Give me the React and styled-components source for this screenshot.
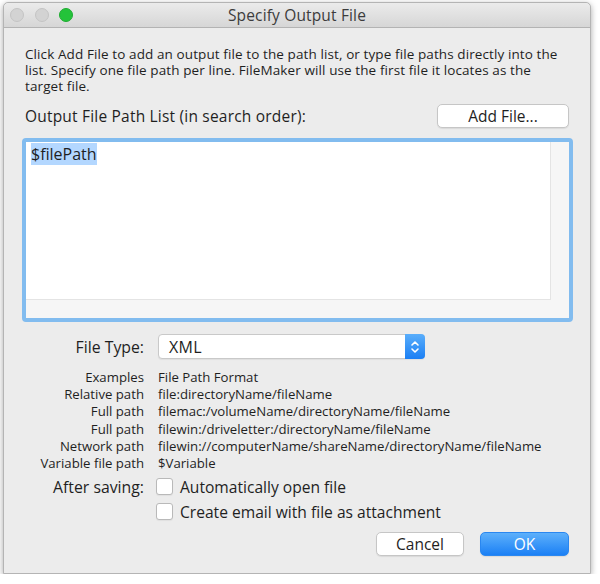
import styled, { createGlobalStyle } from 'styled-components';

const GlobalStyle = createGlobalStyle`
  body {
    margin: 0;
    background: #ffffff;
    font-family: 'Open Sans', 'Liberation Sans', sans-serif;
    color: #1f1f1f;
  }
`;

const Window = styled.div`
  box-sizing: border-box;
  width: 588px;
  height: 572px;
  margin: 2px 0 0 3px;
  background: #ececec;
  border: 1px solid #b4b4b4;
  border-radius: 5px 5px 0 0;
  box-shadow: 0 2px 6px rgba(0, 0, 0, 0.35);
  display: flex;
  flex-direction: column;
`;

const TitleBar = styled.div`
  height: 24px;
  flex: none;
  display: grid;
  grid-template-columns: 1fr auto 1fr;
  align-items: center;
  padding: 0 6px;
  background: linear-gradient(#ebebeb, #d6d6d6);
  border-bottom: 1px solid #b3b3b3;
  border-radius: 5px 5px 0 0;
`;

const Lights = styled.div`
  display: flex;
  gap: 10.5px;
`;

const Light = styled.span`
  width: 14px;
  height: 14px;
  border-radius: 50%;
  box-sizing: border-box;
  background: ${p => (p.$on ? '#24c33a' : '#d3d3d3')};
  border: 1px solid ${p => (p.$on ? '#1eac31' : '#c4c4c4')};
`;

const Title = styled.div`
  font-size: 15.5px;
  letter-spacing: 0.15px;
  color: #3c3c3c;
`;

const Body = styled.div`
  flex: 1;
  padding: 18px 21px 0 21px;
  display: flex;
  flex-direction: column;
`;

const Intro = styled.p`
  margin: 0;
  font-size: 13.5px;
  letter-spacing: 0.1px;
  line-height: 16px;
`;

const ListHeader = styled.div`
  margin-top: 10px;
  display: flex;
  justify-content: space-between;
  align-items: center;
`;

const ListLabel = styled.div`
  font-size: 15.5px;
  letter-spacing: 0.2px;
`;

const Button = styled.button`
  box-sizing: border-box;
  height: 24px;
  width: ${p => p.$w}px;
  border-radius: 5px;
  font-family: inherit;
  font-size: 15.5px;
  padding: 0;
  border: 1px solid ${p => (p.$primary ? '#2a87f0' : '#c6c6c6')};
  color: ${p => (p.$primary ? '#ffffff' : '#1f1f1f')};
  background: ${p => (p.$primary ? 'linear-gradient(#5db0fb, #1b80f5)' : '#ffffff')};
  box-shadow: 0 1px 1px rgba(0, 0, 0, 0.08);
`;

const PathField = styled.div`
  margin: 10px -4px 0 -3px;
  height: 184px;
  box-sizing: border-box;
  border: 4px solid #82bcef;
  border-radius: 4px;
  display: grid;
  grid-template-columns: 1fr 18px;
  grid-template-rows: 1fr 18px;
  background: #f6f6f6;
`;

const PathText = styled.div`
  background: #ffffff;
  border-right: 1px solid #e4e4e4;
  border-bottom: 1px solid #e4e4e4;
  padding: 4px 5px;
  font-size: 16px;
  line-height: 16px;
`;

const Selected = styled.span`
  background: #b3d7ff;
`;

const FormGrid = styled.div`
  display: grid;
  grid-template-columns: 119px 1fr;
  column-gap: 14px;
  align-items: center;
  margin-top: ${p => p.$top}px;
`;

const FieldLabel = styled.div`
  text-align: right;
  font-size: 15.8px;
`;

const Select = styled.div`
  box-sizing: border-box;
  width: 267px;
  height: 25px;
  display: flex;
  align-items: stretch;
  background: #ffffff;
  border: 1px solid #c9c9c9;
  border-radius: 4px;
  box-shadow: 0 1px 1px rgba(0, 0, 0, 0.06);
`;

const SelectValue = styled.div`
  flex: 1;
  display: flex;
  align-items: center;
  padding-left: 10px;
  font-size: 16px;
  letter-spacing: 0.3px;
`;

const Stepper = styled.div`
  width: 20px;
  margin: -1px -1px -1px 0;
  border-radius: 0 4px 4px 0;
  background: linear-gradient(#5aaefb, #1b7ff4);
  display: flex;
  align-items: center;
  justify-content: center;
`;

const ExampleTable = styled.div`
  margin-top: 10px;
  display: grid;
  grid-template-columns: 119px 1fr;
  column-gap: 14px;
  font-size: 13.2px;
  line-height: 17.2px;
`;

const ExampleKey = styled.div`
  text-align: right;
`;

const CheckGrid = styled.div`
  margin-top: 2px;
  display: grid;
  grid-template-columns: 119px 1fr;
  column-gap: 12px;
  grid-auto-rows: 25px;
  align-items: center;
`;

const Check = styled.label`
  display: flex;
  align-items: center;
  gap: 7px;
  font-size: 15.6px;
  grid-column: 2;
`;

const Box = styled.span`
  box-sizing: border-box;
  width: 17px;
  height: 17px;
  background: #ffffff;
  border: 1px solid #b9b9b9;
  border-radius: 3px;
  box-shadow: 0 1px 1px rgba(0, 0, 0, 0.05);
`;

const Footer = styled.div`
  margin-top: 8px;
  display: flex;
  justify-content: flex-end;
  gap: 16px;
`;

const examples = [
  ['Examples', 'File Path Format'],
  ['Relative path', 'file:directoryName/fileName'],
  ['Full path', 'filemac:/volumeName/directoryName/fileName'],
  ['Full path', 'filewin:/driveletter:/directoryName/fileName'],
  ['Network path', 'filewin://computerName/shareName/directoryName/fileName'],
  ['Variable file path', '$Variable'],
];

export default function App() {
  return (
    <>
      <GlobalStyle />
      <Window>
        <TitleBar>
          <Lights>
            <Light />
            <Light />
            <Light $on />
          </Lights>
          <Title>Specify Output File</Title>
          <span />
        </TitleBar>
        <Body>
          <Intro>
            Click Add File to add an output file to the path list, or type file paths directly into the
            list. Specify one file path per line. FileMaker will use the first file it locates as the
            target file.
          </Intro>
          <ListHeader>
            <ListLabel>Output File Path List (in search order):</ListLabel>
            <Button $w={132}>Add File...</Button>
          </ListHeader>
          <PathField>
            <PathText>
              <Selected>$filePath</Selected>
            </PathText>
            <div />
            <div />
            <div />
          </PathField>
          <FormGrid $top={12}>
            <FieldLabel>File Type:</FieldLabel>
            <Select>
              <SelectValue>XML</SelectValue>
              <Stepper>
                <svg width="10" height="14" viewBox="0 0 10 14" fill="none" stroke="#fff" strokeWidth="1.6" strokeLinecap="round" strokeLinejoin="round">
                  <path d="M2 5 L5 2 L8 5" />
                  <path d="M2 9 L5 12 L8 9" />
                </svg>
              </Stepper>
            </Select>
          </FormGrid>
          <ExampleTable>
            {examples.map(([k, v], i) => (
              <>
                <ExampleKey key={'k' + i}>{k}</ExampleKey>
                <div key={'v' + i}>{v}</div>
              </>
            ))}
          </ExampleTable>
          <CheckGrid>
            <FieldLabel>After saving:</FieldLabel>
            <Check>
              <Box />
              Automatically open file
            </Check>
            <Check>
              <Box />
              Create email with file as attachment
            </Check>
          </CheckGrid>
          <Footer>
            <Button $w={88}>Cancel</Button>
            <Button $w={89} $primary>OK</Button>
          </Footer>
        </Body>
      </Window>
    </>
  );
}
